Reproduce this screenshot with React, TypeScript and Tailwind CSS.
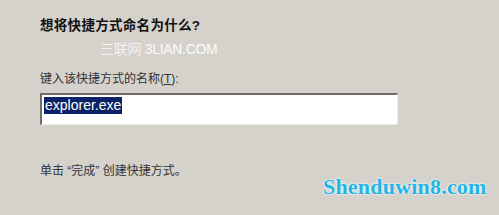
export default function App() {
  return (
    <div className="relative h-[215px] w-[499px] overflow-hidden bg-[#d5d2cc] font-['Liberation_Sans','Noto_Sans_CJK_SC',sans-serif]">
      <div className="flex flex-col pl-[40px] pt-[17px]">
        <h1 className="text-[13.5px] font-bold leading-[17px] tracking-[0.3px] text-[#111]">想将快捷方式命名为什么?</h1>
        <div className="ml-[60px] mt-[8px] text-[14px] font-light leading-[15px] tracking-[-0.3px] text-white/90">三联网 3LIAN.COM</div>
        <label className="mt-[14px] text-[12px] leading-[16px] text-[#333]">
          键入该快捷方式的名称(<span className="underline">T</span>):
        </label>
        <div className="mt-[6px] flex h-[32px] w-[358px] items-start border-l-2 border-t-2 border-b border-r border-l-[#6f6d68] border-t-[#6f6d68] border-b-[#ece9e3] border-r-[#ece9e3] bg-white pl-[2px] pt-[2px]">
          <span className="bg-[#0b2366] px-[1px] text-[14px] leading-[17px] text-white">explorer.exe</span>
        </div>
        <p className="mt-[38px] text-[12px] leading-[16px] text-[#333]">单击 “完成” 创建快捷方式。</p>
      </div>
      <div className="absolute left-[323px] top-[175px] font-['Liberation_Serif',serif] text-[22px] font-bold leading-[24px] tracking-[0.2px] text-[#1fb5e6] [text-shadow:0_0_2px_#fff,0_0_2px_#fff]">
        Shenduwin8.com
      </div>
    </div>
  );
}
